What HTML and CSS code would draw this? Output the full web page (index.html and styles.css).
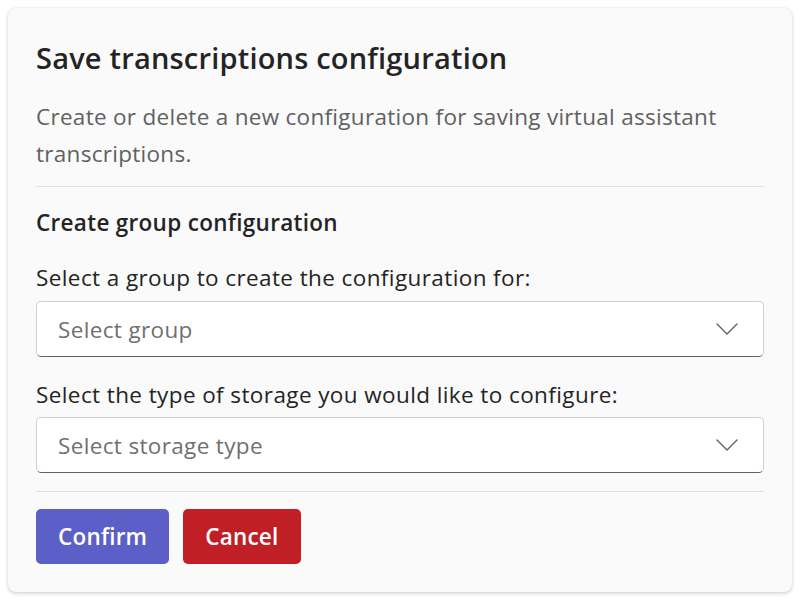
FILE: index.html
```html
<!DOCTYPE html>
<html lang="en">
<head>
<meta charset="utf-8">
<title>Save transcriptions configuration</title>
<link rel="stylesheet" href="styles.css">
</head>
<body>
<div class="card">
  <h1 class="title">Save transcriptions configuration</h1>
  <p class="desc">Create or delete a new configuration for saving virtual assistant transcriptions.</p>
  <hr class="divider divider-top">
  <h2 class="subtitle">Create group configuration</h2>
  <label class="label label-first">Select a group to create the configuration for:</label>
  <div class="select select-first">
    <span class="placeholder">Select group</span>
    <svg class="chevron" width="22" height="12" viewBox="0 0 22 12"><path d="M1 1 L11 11 L21 1" fill="none" stroke="#616161" stroke-width="1.4" stroke-linecap="round" stroke-linejoin="round"/></svg>
  </div>
  <label class="label label-second">Select the type of storage you would like to configure:</label>
  <div class="select select-second">
    <span class="placeholder">Select storage type</span>
    <svg class="chevron" width="22" height="12" viewBox="0 0 22 12"><path d="M1 1 L11 11 L21 1" fill="none" stroke="#616161" stroke-width="1.4" stroke-linecap="round" stroke-linejoin="round"/></svg>
  </div>
  <hr class="divider divider-bottom">
  <div class="actions">
    <button class="btn btn-primary">Confirm</button>
    <button class="btn btn-danger">Cancel</button>
  </div>
</div>
</body>
</html>
```

FILE: styles.css
```css
html, body {
  margin: 0;
  padding: 0;
  background: #ffffff;
}
body {
  padding: 8px;
  font-family: "Open Sans", "Noto Sans", sans-serif;
  color: #242424;
}
.card {
  width: 784px;
  box-sizing: border-box;
  padding: 30px 28px 28px;
  background: #fafafa;
  border-radius: 8px;
  box-shadow: 0 0 2px rgba(0,0,0,0.12), 0 2px 4px rgba(0,0,0,0.14);
}
.title {
  margin: 0;
  font-size: 29px;
  letter-spacing: 0.2px;
  line-height: 40px;
  font-weight: 600;
  color: #242424;
}
.desc {
  margin: 20px 0 0;
  font-size: 22.5px;
  letter-spacing: 0.29px;
  line-height: 37px;
  color: #616161;
}
.divider {
  border: 0;
  height: 1px;
  background: #e0e0e0;
  margin: 0;
}
.divider-top { margin-top: 14px; }
.subtitle {
  margin: 21px 0 0;
  font-size: 22.5px;
  letter-spacing: 0.3px;
  line-height: 30px;
  font-weight: 600;
  color: #242424;
}
.label {
  display: block;
  font-size: 22.5px;
  letter-spacing: 0.4px;
  line-height: 30px;
  color: #242424;
}
.label-first { margin-top: 25px; }
.label-second { margin-top: 23px; }
.select {
  height: 56px;
  box-sizing: border-box;
  background: #ffffff;
  border: 1px solid #d1d1d1;
  border-bottom-color: #616161;
  border-radius: 5px;
  padding: 0 25px 0 21px;
  display: flex;
  align-items: center;
  justify-content: space-between;
}
.select-first { margin-top: 8px; }
.select-second { margin-top: 7px; }
.placeholder {
  font-size: 22.5px;
  letter-spacing: 0.35px;
  color: #707070;
}
.chevron { display: block; }
.divider-bottom { margin-top: 18px; }
.actions {
  margin-top: 17px;
  display: flex;
  gap: 14px;
}
.btn {
  height: 55px;
  border: 0;
  border-radius: 5px;
  padding: 0 22px;
  font-family: "Open Sans", "Noto Sans", sans-serif;
  font-size: 22.5px;
  letter-spacing: 0.2px;
  font-weight: 600;
  color: #ffffff;
}
.btn-primary { background: #5b5fc7; }
.btn-danger { background: #c01f26; }
```
